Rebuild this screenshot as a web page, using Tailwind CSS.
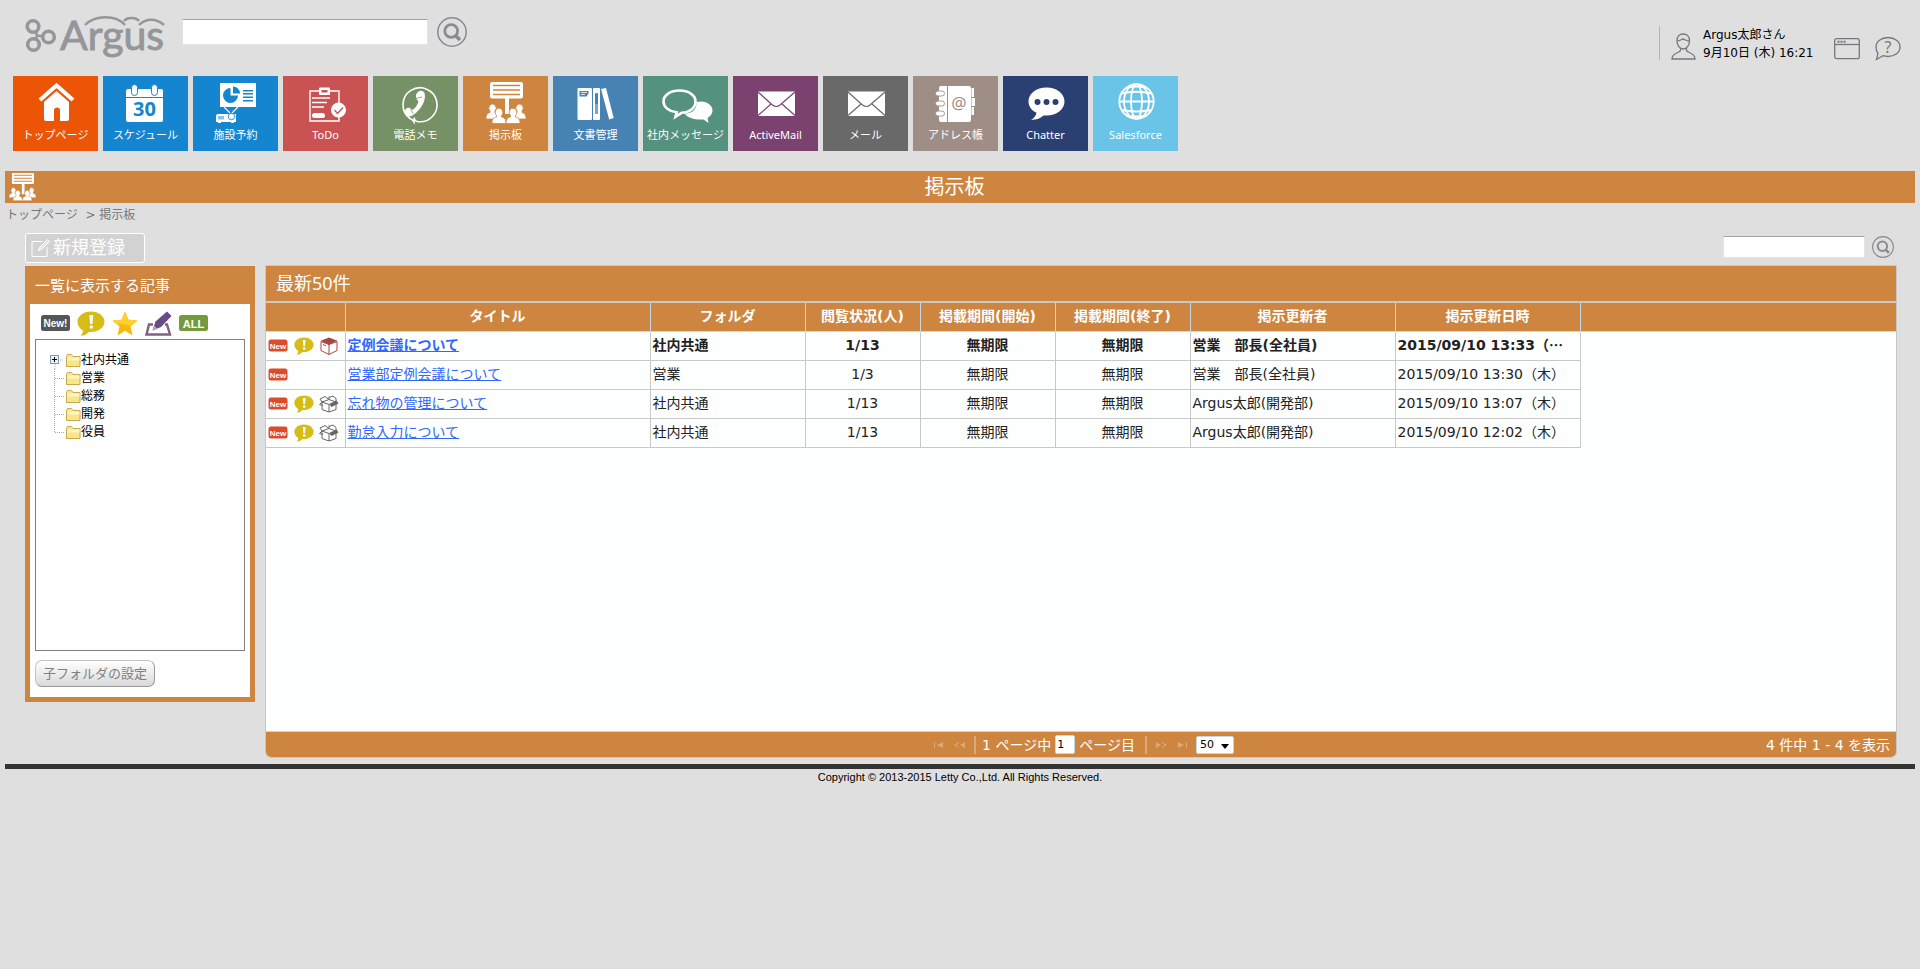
<!DOCTYPE html>
<html lang="ja">
<head>
<meta charset="utf-8">
<title>Argus 掲示板</title>
<script src="https://cdn.jsdelivr.net/npm/@tailwindcss/browser@4"></script>
</head>
<body class="min-h-screen bg-[#dfdfdf] font-['DejaVu_Sans','Noto_Sans_CJK_JP',sans-serif] text-sm text-[#222222]">

<svg class="hidden" aria-hidden="true">
  <symbol id="board" viewBox="0 0 34 41">
    <path fill="#fff" d="M2 0h29a2 2 0 0 1 2 2v12.500a2 2 0 0 1-2 2H19V32h-4V16.500H2a2 2 0 0 1-2-2V2a2 2 0 0 1 2-2z"/>
    <path stroke="#cd853f" stroke-width="1.600" d="M3 3.500h27M3 8h27M3 12.500h27"/>
  </symbol>
  <symbol id="bulletin" viewBox="0 0 40 42">
    <use href="#board" x="4" y="0" width="34" height="41"/>
    <g fill="#fff" stroke="#cd853f" stroke-width=".8">
      <path d="M0 37c0-5 2-6 4-6.500V29a3.600 4 0 1 1 5 0v1.500c2 .5 4 1.500 4 6.500z"/>
      <path d="M27 37c0-5 2-6 4-6.500V29a3.600 4 0 1 1 5 0v1.500c2 .5 4 1.500 4 6.500z"/>
      <path d="M6 41.500c0-5 2-6 4.500-6.500v-1.500a3.800 4.200 0 1 1 5 0V35c2.500.5 4.500 1.500 4.500 6.500z"/>
      <path d="M20 41.500c0-5 2-6 4.500-6.500v-1.500a3.800 4.200 0 1 1 5 0V35c2.500.5 4.500 1.500 4.500 6.500z"/>
    </g>
  </symbol>
  <symbol id="search" viewBox="0 0 30 30">
    <circle cx="15" cy="15" r="14.200" fill="none" stroke="#8b8b8f" stroke-width="1.500"/>
    <circle cx="14.200" cy="14" r="6.400" fill="none" stroke="#8b8b8f" stroke-width="2.800"/>
    <path d="M18.500 18.500l4.500 4.500" stroke="#8b8b8f" stroke-width="3.600"/>
  </symbol>
  <symbol id="folder" viewBox="0 0 15 13">
    <path d="M.5 12.500v-10l1-2h4l1.500 2h7v10z" fill="#f7e68c" stroke="#c9a94a"/>
    <path d="M1.500 3.500h12v3h-12z" fill="#fdf6bd"/>
  </symbol>
  <symbol id="alert" viewBox="0 0 28 25">
    <path d="M14 .5c7.500 0 13.500 4.500 13.500 10.200S21.500 21 14 21l-2-.1C9.500 23.500 6.500 24.800 3.500 24.500c1.500-1 2.500-3 2.500-5C2.500 17.500.5 14.300.5 10.700.5 5 6.500.5 14 .5z" fill="#d6bc17"/>
    <path d="M12.300 4h4l-.9 9h-2.200z" fill="#fff"/><circle cx="14.300" cy="16" r="1.800" fill="#fff"/>
  </symbol>
  <symbol id="boxclosed" viewBox="0 0 18 18">
    <path d="M1 4.500v9l8 4 8-4v-9L9 7.500z" fill="#fff" stroke="#a94442"/>
    <path d="M9 .5l8.300 3.300L9 7.500.7 3.800z" fill="#a94442"/><path d="M9 7v10.500M3 7.500l3 1.300" stroke="#a94442"/>
  </symbol>
  <symbol id="boxopen" viewBox="0 0 20 18">
    <path d="M3 7v7.500l7 2.500 7-2.500V7L10 4.500z" fill="#fff" stroke="#666"/>
    <path d="M3 7l7 2.500V17M10 4.500V1.500M3 7L1 4l5-2.500 4 3M10 2.500l4-1.500 3 2.500v3.500M3 7l-2.500 2.500L4 10.500" fill="none" stroke="#666"/>
    <path d="M10 9l7.500-3.500 2 3L12.500 12z" fill="#666"/>
  </symbol>
  <symbol id="newtag" viewBox="0 0 20 13">
    <rect x=".5" y=".5" width="19" height="12" rx="2.500" fill="#dc4b2c"/>
    <text x="10" y="9.500" text-anchor="middle" font-family="Liberation Sans" font-weight="bold" font-size="8" fill="#fff">New</text>
  </symbol>
</svg>

<header class="flex h-19 items-start pr-[19px] pl-[25px]">
  <a href="#" aria-label="Argus" class="mt-[14px] block">
    <svg width="141" height="48" viewBox="0 0 141 48">
      <g fill="none" stroke="#95969a" stroke-width="3.600">
        <circle cx="8" cy="12.500" r="5.800"/><circle cx="8.500" cy="30.500" r="5.800"/><circle cx="23.500" cy="23" r="5.800"/>
        <path stroke-width="2.400" d="M11 17.500c1 3 1.500 5 0 8M12 21.500l6 1"/>
        <path stroke-width="2.400" d="M60 11C71 .5 91 1 100 11M99 7c3-4 12-4 15 0M114 11c7-7 17-7 25 0"/>
      </g>
      <text x="35" y="36" font-family="Lato" font-size="41" fill="#95969a" stroke="#95969a" stroke-width=".9">Argus</text>
    </svg>
  </a>
  <form class="mt-[17px] ml-4 flex items-center gap-[9px]">
    <input type="text" aria-label="全体検索" class="h-[26px] w-[246px] border border-[#e3e3ea] border-t-[#a5a5a5] bg-white px-1">
    <button type="button" aria-label="検索"><svg class="size-[30px]"><use href="#search"/></svg></button>
  </form>
  <div class="mt-[26px] ml-auto flex">
    <div class="mr-[11px] h-[34px] w-px bg-[#b5b5b5]"></div>
    <svg class="mt-[7px] mr-[7px]" width="25" height="27" viewBox="0 0 25 27" fill="none" stroke="#77777a" stroke-width="1.300">
      <path d="M6 7.500C6 3.500 8.500 1 12.200 1s6.300 2.500 6.300 6.500c0 4.500-2.500 8.500-6.300 8.500S6 12 6 7.500zM6 8c3 0 4-1.500 5.500-2 2.500 0 4 2.500 7 2M9.500 15v2.500C8.500 20 1 19.500 1 26h23c0-6.500-7.500-6-8.500-8.500V15"/>
    </svg>
    <div class="w-[131px] text-xs leading-[18px] whitespace-nowrap text-black">
      <p>Argus太郎さん</p>
      <p>9月10日 (木) 16:21</p>
    </div>
    <button type="button" aria-label="ウィンドウ" class="mt-3 self-start">
      <svg width="26" height="22" viewBox="0 0 26 22" fill="none" stroke="#77777a" stroke-width="1.300"><rect x=".7" y=".7" width="24.600" height="20" rx="2"/><path d="M1 6.500h24"/><path d="M3.500 3.700h8" stroke-width="2" stroke-dasharray="2 1"/></svg>
    </button>
    <button type="button" aria-label="ヘルプ" class="mt-[10px] ml-[14px] self-start">
      <svg width="27" height="25" viewBox="0 0 27 25"><path d="M14 1.500c6.800 0 12 4 12 9.500s-5.200 9.500-12 9.500c-1.800 0-3.500-.3-5-.8L2.500 23.500l1.500-6C2.700 16 2 13.500 2 11c0-5.500 5.200-9.500 12-9.500z" fill="none" stroke="#77777a" stroke-width="1.300"/><text x="14" y="16.500" text-anchor="middle" font-family="Noto Sans" font-size="16" fill="#77777a">?</text></svg>
    </button>
  </div>
</header>

<nav class="flex gap-[5px] px-[13px] font-['Noto_Sans','Noto_Sans_CJK_JP',sans-serif] text-[11px] leading-[18px] text-white">
  <a href="#" class="flex h-[75px] w-[85px] flex-col items-center whitespace-nowrap bg-[#eb5505]">
    <svg width="85" height="50" viewBox="0 0 85 50"><path d="M31 25l12.500-11L56 25v18a2 2 0 0 1-2 2h-7V34c0-3.500-6-3.500-6 0v11h-8a2 2 0 0 1-2-2z" fill="#fff"/><path d="M27 25.500L43.500 11 60 25.500" fill="none" stroke="#eb5505" stroke-width="6"/><path d="M27 24L43.500 9.500 60 24" fill="none" stroke="#fff" stroke-width="4"/></svg>
    トップページ</a>
  <a href="#" class="flex h-[75px] w-[85px] flex-col items-center whitespace-nowrap bg-[#1585cf]">
    <svg width="85" height="50" viewBox="0 0 85 50"><rect x="23" y="13" width="37" height="33" rx="2" fill="#fff"/><path d="M23 21.500h37" stroke="#1585cf"/><g fill="#fff" stroke="#1585cf"><rect x="28.500" y="8.500" width="6" height="11" rx="3"/><rect x="48.500" y="8.500" width="6" height="11" rx="3"/></g><text x="41.500" y="40" text-anchor="middle" font-family="Noto Sans" font-weight="bold" font-size="20" fill="#1585cf">30</text></svg>
    スケジュール</a>
  <a href="#" class="flex h-[75px] w-[85px] flex-col items-center whitespace-nowrap bg-[#1585cf]">
    <svg width="85" height="50" viewBox="0 0 85 50"><rect x="27" y="7" width="36" height="24" fill="#fff"/><path d="M37.500 12v7.500H45A7.500 7.500 0 1 1 37.500 12zM40 10.500a7 7 0 0 1 7 7h-7zM50 14h10v1.500H50zM50 17h10v1.500H50zM50 20.500h10V22H50zM50 24h10v1.500H50z" fill="#1585cf"/><path d="M31 31l6 6M45 31l-6 6" stroke="#fff" stroke-width="1.200"/><path d="M25 38h18v8h-2v1h-3v-1H28v1h-3v-1h-2v-6a2 2 0 0 1 2-2z" fill="#fff"/><circle cx="38.500" cy="40.500" r="3.200" fill="#fff" stroke="#1585cf" stroke-width=".9"/><path d="M26 40v3.500M28 40v3.500M30 40v3.500" stroke="#1585cf"/></svg>
    施設予約</a>
  <a href="#" class="flex h-[75px] w-[85px] flex-col items-center whitespace-nowrap bg-[#c95353]">
    <svg width="85" height="50" viewBox="0 0 85 50"><path d="M56 27V15H27v30h29v-4" fill="none" stroke="#fff" stroke-width="1.400"/><rect x="36" y="11.500" width="11" height="7.500" rx="1" fill="#fff"/><path d="M38.500 14h6v2.500h-6z" fill="#c95353"/><path d="M29 22h18M29 26.500h15M29 31h12" stroke="#fff" stroke-width="1.500"/><rect x="29" y="37" width="13" height="5" rx="2.500" fill="#fff"/><circle cx="55.500" cy="34" r="7.500" fill="#fff"/><path d="M51.500 34l3 3.500 5.500-6" fill="none" stroke="#c95353" stroke-width="1.300"/></svg>
    ToDo</a>
  <a href="#" class="flex h-[75px] w-[85px] flex-col items-center whitespace-nowrap bg-[#769165]">
    <svg width="85" height="50" viewBox="0 0 85 50"><path d="M41 42.500V46c-1-1.500-2.500-3-4-3.500a17 17 0 1 1 7 3c-2.500-.5-2.500-2.500-3-4" fill="none" stroke="#fff" stroke-width="1.600"/><path d="M44.500 16.500c2-2.500 5.500-2 7 .5 1.500 5-1 11-4.500 15.500S39 41 35 40.500c-2.500-1-3.500-5-2.500-7 1.500-2.500 5-2 7 .5 3-2 5.500-6 6-9-3-2-3.500-6-1-8.500z" fill="#fff"/><path d="M43 22.500l6-1.500M37.500 32.500l2.500 5" stroke="#769165" stroke-width=".8"/></svg>
    電話メモ</a>
  <a href="#" class="flex h-[75px] w-[85px] flex-col items-center whitespace-nowrap bg-[#cd853f]">
    <svg width="85" height="50" viewBox="0 0 85 50"><use href="#bulletin" x="23" y="6" width="40" height="42"/></svg>
    掲示板</a>
  <a href="#" class="flex h-[75px] w-[85px] flex-col items-center whitespace-nowrap bg-[#4682b4]">
    <svg width="85" height="50" viewBox="0 0 85 50"><g fill="#fff"><rect x="24.500" y="12" width="14.500" height="32" rx="1"/><rect x="40" y="12" width="7" height="32" rx="1"/><path d="M48 13l5-1 7.700 30-4.500 1.500z"/></g><path d="M26.500 15h9v2.500l-2 3h-7zM42 18c0-1.500 3-1.500 3 0v20h-3z" fill="#4682b4"/><path d="M28 16.500h6M28 18.500h4" stroke="#fff" stroke-width=".8"/><path d="M42 28v10h3V28z" fill="#7ba6cb"/></svg>
    文書管理</a>
  <a href="#" class="flex h-[75px] w-[85px] flex-col items-center whitespace-nowrap bg-[#55917f]">
    <svg width="85" height="50" viewBox="0 0 85 50"><path d="M58 25.500c6.500 0 11.500 4 11.500 9 0 3-2 5.800-5 7.500l1 5-5-3.500c-9 .5-15.500-1.500-19-6C50 38 54 32 53.500 26z" fill="#fff"/><path d="M36.500 14.500c9 0 16 4.500 16 11s-6 11-14 11.300l-6 4 1.200-4.500C26 35.500 20.500 31 20.500 25.500c0-6.500 7-11 16-11z" fill="#55917f" stroke="#fff" stroke-width="2.600"/></svg>
    社内メッセージ</a>
  <a href="#" class="flex h-[75px] w-[85px] flex-col items-center whitespace-nowrap bg-[#7b4270]">
    <svg width="85" height="50" viewBox="0 0 85 50"><rect x="25" y="15.500" width="37" height="24.500" fill="#fff"/><path d="M25 16l14.500 13c2.500 2 5 2 7.500 0L62 16M25 39.500l13-11.500M62 39.500L49 28" fill="none" stroke="#7b4270" stroke-width="1.200"/></svg>
    ActiveMail</a>
  <a href="#" class="flex h-[75px] w-[85px] flex-col items-center whitespace-nowrap bg-[#696969]">
    <svg width="85" height="50" viewBox="0 0 85 50"><rect x="25" y="15.500" width="37" height="24.500" fill="#fff"/><path d="M25 16l14.500 13c2.500 2 5 2 7.500 0L62 16M25 39.500l13-11.500M62 39.500L49 28" fill="none" stroke="#696969" stroke-width="1.200"/></svg>
    メール</a>
  <a href="#" class="flex h-[75px] w-[85px] flex-col items-center whitespace-nowrap bg-[#9e8e86]">
    <svg width="85" height="50" viewBox="0 0 85 50"><path d="M28 10h28a2 2 0 0 1 2 2v32a2 2 0 0 1-2 2H28a2 2 0 0 1-2-2V12a2 2 0 0 1 2-2zM58.500 12H61v9h-2.500zM58.500 22H62v8h-3.500zM58.500 31H61v8h-2.500z" fill="#fff"/><path d="M34.500 10v36" stroke="#9e8e86"/><g fill="#fff" stroke="#9e8e86" stroke-width=".9"><rect x="22.500" y="15" width="9" height="5" rx="2.500"/><rect x="22.500" y="25" width="9" height="5" rx="2.500"/><rect x="22.500" y="35" width="9" height="5" rx="2.500"/></g><text x="46" y="33" text-anchor="middle" font-family="Noto Sans" font-size="17" fill="#9e8e86">@</text></svg>
    アドレス帳</a>
  <a href="#" class="flex h-[75px] w-[85px] flex-col items-center whitespace-nowrap bg-[#2a4073]">
    <svg width="85" height="50" viewBox="0 0 85 50"><path d="M43.500 11.500c10 0 18 6 18 14s-8 14-18 14h-3c-3 3-8 4.700-12.500 4.300 3-1.500 5-4 5.500-7-5-2.500-8-6.500-8-11.300 0-8 8-14 18-14z" fill="#fff"/><g fill="#2a4073"><circle cx="34.500" cy="26" r="3"/><circle cx="43.500" cy="26" r="3"/><circle cx="52.500" cy="26" r="3"/></g></svg>
    Chatter</a>
  <a href="#" class="flex h-[75px] w-[85px] flex-col items-center whitespace-nowrap bg-[#6ac4e8]">
    <svg width="85" height="50" viewBox="0 0 85 50" fill="none" stroke="#fff" stroke-width="1.800"><circle cx="43.500" cy="25.500" r="17.200"/><ellipse cx="43.500" cy="25.500" rx="12.500" ry="17.300"/><ellipse cx="43.500" cy="25.500" rx="5.500" ry="17.300"/><path d="M26 25.500h35M28.500 17.500Q43.500 14 58.500 17.500M28.500 34Q43.500 37 58.500 34M33 12Q43.500 9 54 12M33 39.500Q43.500 41.500 54 39.500"/></svg>
    Salesforce</a>
</nav>

<div class="mx-[5px] mt-5 flex h-8 items-center bg-[#cd853f] pr-[46px] pl-1">
  <svg class="h-[28px] w-[27px]" viewBox="0 0 40 42" preserveAspectRatio="none"><use href="#bulletin" width="40" height="42"/></svg>
  <h1 class="ml-1 flex-1 text-center text-xl leading-8 text-white">掲示板</h1>
</div>

<div class="ml-[6px] text-xs leading-6 text-[#777777]"><a href="#">トップページ</a> &nbsp;&gt; 掲示板</div>

<div class="mt-[6px] flex h-[32px] items-start justify-between pr-[26px] pl-[25px]">
  <button type="button" class="flex h-[30px] w-[120px] items-center rounded-[3px] border border-white bg-[#d2d2d2] pl-[5px] text-lg leading-7 whitespace-nowrap text-white">
    <svg width="20" height="20" viewBox="0 0 20 20" fill="none" stroke="#fff"><path d="M12 3.500H1v15h15V9"/><path d="M7.500 12.500l1-3 8-8 2 2-8 8z" fill="#e6e6e6"/></svg>
    <span class="ml-[2px]">新規登録</span>
  </button>
  <form class="mt-[3px] flex items-center gap-[7px]">
    <input type="text" aria-label="掲示板検索" class="h-[22px] w-[142px] border border-[#e3e3ea] border-t-[#a5a5a5] bg-white px-1">
    <button type="button" aria-label="検索"><svg class="size-[22px]"><use href="#search"/></svg></button>
  </form>
</div>

<main class="flex items-start gap-[10px] pr-[23px] pl-[25px]">
  <aside class="mt-px w-[230px] shrink-0 border-5 border-t-0 border-[#cd853f] bg-white">
    <h2 class="bg-[#cd853f] pt-[2px] pl-[5px] text-[15px] leading-9 text-white">一覧に表示する記事</h2>
    <div class="px-[5px] pb-[10px]">
      <div class="flex h-[35px] items-center gap-[7px] pt-[3px] pl-[6px]">
        <button type="button" aria-label="New!"><svg width="29" height="16" viewBox="0 0 29 16"><rect width="29" height="16" rx="2.500" fill="#55565a"/><text x="14.500" y="12" text-anchor="middle" font-family="Liberation Sans" font-weight="bold" font-size="10" fill="#fff">New!</text></svg></button>
        <button type="button" aria-label="重要"><svg width="28" height="25"><use href="#alert"/></svg></button>
        <button type="button" aria-label="お気に入り"><svg width="26" height="25" viewBox="0 0 26 25"><path d="M13 .5l3.500 8.300 9 .7-7 6 2 9-7.500-4.800L5.500 24.500l2-9-7-6 9-.7z" fill="#f6b90c"/><path d="M13 .5l3.500 8.300 9 .7-7 5.500c-5-2-9-2-14.500-2L.5 9.500l9-.7z" fill="#fdcf2f"/></svg></button>
        <button type="button" aria-label="下書き"><svg width="27" height="25" viewBox="0 0 27 25"><path d="M8 13.500H4L1.500 23.500h23.500l-3-10h-2" fill="none" stroke="#80617e" stroke-width="2.400"/><path d="M7.500 19.500l3-9L22 .5l4.500 4.500L16 16z" fill="#674a86"/><path d="M7.500 19.500l1.500-5 3.500 3.500z" fill="#b9a3c4"/></svg></button>
        <button type="button" aria-label="ALL"><svg width="29" height="16" viewBox="0 0 29 16"><rect width="29" height="16" rx="2.500" fill="#749a3c"/><text x="14.500" y="12.500" text-anchor="middle" font-family="Liberation Sans" font-weight="bold" font-size="11" fill="#fff">ALL</text></svg></button>
      </div>
      <div class="h-[312px] border border-[#808080] pt-[11px] pl-[14px] text-xs text-black">
        <ul class="leading-[18px]">
          <li class="flex items-center">
            <svg width="16" height="18" viewBox="0 0 16 18"><path d="M5 13v5M10 9h4" stroke="#aaa" stroke-dasharray="1 1"/><rect x=".5" y="4.500" width="8" height="8" fill="#eef2f8" stroke="#7b9ac0"/><path d="M2 8.500h5M4.500 6v5" stroke="#000"/></svg>
            <a href="#" class="flex items-center"><svg width="15" height="13"><use href="#folder"/></svg>社内共通</a></li>
          <li class="flex items-center">
            <svg width="16" height="18" viewBox="0 0 16 18"><path d="M4.500 0v18M5 9.500h9" stroke="#aaa" stroke-dasharray="1 1"/></svg>
            <a href="#" class="flex items-center"><svg width="15" height="13"><use href="#folder"/></svg>営業</a></li>
          <li class="flex items-center">
            <svg width="16" height="18" viewBox="0 0 16 18"><path d="M4.500 0v18M5 9.500h9" stroke="#aaa" stroke-dasharray="1 1"/></svg>
            <a href="#" class="flex items-center"><svg width="15" height="13"><use href="#folder"/></svg>総務</a></li>
          <li class="flex items-center">
            <svg width="16" height="18" viewBox="0 0 16 18"><path d="M4.500 0v18M5 9.500h9" stroke="#aaa" stroke-dasharray="1 1"/></svg>
            <a href="#" class="flex items-center"><svg width="15" height="13"><use href="#folder"/></svg>開発</a></li>
          <li class="flex items-center">
            <svg width="16" height="18" viewBox="0 0 16 18"><path d="M4.500 0v10M5 9.500h9" stroke="#aaa" stroke-dasharray="1 1"/></svg>
            <a href="#" class="flex items-center"><svg width="15" height="13"><use href="#folder"/></svg>役員</a></li>
        </ul>
      </div>
      <button type="button" class="mt-[9px] block h-[27px] w-[120px] rounded-[7px] border border-[#c4c4c4] border-r-[#999999] border-b-[#999999] bg-linear-to-b from-white to-[#d9d9d9] text-[13px] leading-6 whitespace-nowrap text-[#808080]">子フォルダの設定</button>
    </div>
  </aside>

  <section class="min-w-0 flex-1 overflow-hidden rounded-b-md border border-[#c8c8c8] bg-[#fdfefe]">
    <h2 class="border-b-2 border-[#c8c8c8] bg-[#cd853f] pb-px pl-[10px] font-['Noto_Sans','Noto_Sans_CJK_JP',sans-serif] text-lg leading-[34px] text-white">最新50件</h2>
    <div class="min-h-[428px]">
      <table class="w-full table-fixed border-collapse leading-5 whitespace-nowrap">
        <colgroup><col class="w-[79px]"><col class="w-[305px]"><col class="w-[155px]"><col class="w-[115px]"><col class="w-[135px]"><col class="w-[135px]"><col class="w-[205px]"><col class="w-[185px]"><col></colgroup>
        <thead>
          <tr class="h-[28px] border-b border-[#c5d6e5] bg-[#cd853f] text-white">
            <th class="border-r border-[#c5d6e5]"></th>
            <th class="border-r border-[#c5d6e5] pb-[2px]">タイトル</th>
            <th class="border-r border-[#c5d6e5] pb-[2px]">フォルダ</th>
            <th class="border-r border-[#c5d6e5] pb-[2px]">閲覧状況(人)</th>
            <th class="border-r border-[#c5d6e5] pb-[2px]">掲載期間(開始)</th>
            <th class="border-r border-[#c5d6e5] pb-[2px]">掲載期間(終了)</th>
            <th class="border-r border-[#c5d6e5] pb-[2px]">掲示更新者</th>
            <th class="border-r border-[#c5d6e5] pb-[2px]">掲示更新日時</th>
            <th></th>
          </tr>
        </thead>
        <tbody>
          <tr class="h-[29px] font-bold">
            <td class="border-r border-b border-[#c8c8c8] pl-[2px]"><div class="flex items-center"><svg width="20" height="13"><use href="#newtag"/></svg><svg class="ml-[6px]" width="20" height="18"><use href="#alert"/></svg><svg class="ml-[6px]" width="18" height="18"><use href="#boxclosed"/></svg></div></td>
            <td class="border-r border-b border-[#c8c8c8] pb-[2px] pl-[2px]"><a href="#" class="text-[#3366ff] underline">定例会議について</a></td>
            <td class="border-r border-b border-[#c8c8c8] pb-[2px] pl-[2px]">社内共通</td>
            <td class="border-r border-b border-[#c8c8c8] pb-[2px] text-center">1/13</td>
            <td class="border-r border-b border-[#c8c8c8] pb-[2px] text-center">無期限</td>
            <td class="border-r border-b border-[#c8c8c8] pb-[2px] text-center">無期限</td>
            <td class="border-r border-b border-[#c8c8c8] pb-[2px] pl-[2px]">営業　部長(全社員)</td>
            <td class="border-r border-b border-[#c8c8c8] pb-[2px] pl-[2px]">2015/09/10 13:33（<span class="font-['Noto_Sans_CJK_JP',sans-serif]">…</span></td>
          </tr>
          <tr class="h-[29px]">
            <td class="border-r border-b border-[#c8c8c8] pl-[2px]"><svg width="20" height="13"><use href="#newtag"/></svg></td>
            <td class="border-r border-b border-[#c8c8c8] pb-[2px] pl-[2px]"><a href="#" class="text-[#3366ff] underline">営業部定例会議について</a></td>
            <td class="border-r border-b border-[#c8c8c8] pb-[2px] pl-[2px]">営業</td>
            <td class="border-r border-b border-[#c8c8c8] pb-[2px] text-center">1/3</td>
            <td class="border-r border-b border-[#c8c8c8] pb-[2px] text-center">無期限</td>
            <td class="border-r border-b border-[#c8c8c8] pb-[2px] text-center">無期限</td>
            <td class="border-r border-b border-[#c8c8c8] pb-[2px] pl-[2px]">営業　部長(全社員)</td>
            <td class="border-r border-b border-[#c8c8c8] pb-[2px] pl-[2px]">2015/09/10 13:30（木）</td>
          </tr>
          <tr class="h-[29px]">
            <td class="border-r border-b border-[#c8c8c8] pl-[2px]"><div class="flex items-center"><svg width="20" height="13"><use href="#newtag"/></svg><svg class="ml-[6px]" width="20" height="18"><use href="#alert"/></svg><svg class="ml-[5px]" width="20" height="18"><use href="#boxopen"/></svg></div></td>
            <td class="border-r border-b border-[#c8c8c8] pb-[2px] pl-[2px]"><a href="#" class="text-[#3366ff] underline">忘れ物の管理について</a></td>
            <td class="border-r border-b border-[#c8c8c8] pb-[2px] pl-[2px]">社内共通</td>
            <td class="border-r border-b border-[#c8c8c8] pb-[2px] text-center">1/13</td>
            <td class="border-r border-b border-[#c8c8c8] pb-[2px] text-center">無期限</td>
            <td class="border-r border-b border-[#c8c8c8] pb-[2px] text-center">無期限</td>
            <td class="border-r border-b border-[#c8c8c8] pb-[2px] pl-[2px]">Argus太郎(開発部)</td>
            <td class="border-r border-b border-[#c8c8c8] pb-[2px] pl-[2px]">2015/09/10 13:07（木）</td>
          </tr>
          <tr class="h-[29px]">
            <td class="border-r border-b border-[#c8c8c8] pl-[2px]"><div class="flex items-center"><svg width="20" height="13"><use href="#newtag"/></svg><svg class="ml-[6px]" width="20" height="18"><use href="#alert"/></svg><svg class="ml-[5px]" width="20" height="18"><use href="#boxopen"/></svg></div></td>
            <td class="border-r border-b border-[#c8c8c8] pb-[2px] pl-[2px]"><a href="#" class="text-[#3366ff] underline">勤怠入力について</a></td>
            <td class="border-r border-b border-[#c8c8c8] pb-[2px] pl-[2px]">社内共通</td>
            <td class="border-r border-b border-[#c8c8c8] pb-[2px] text-center">1/13</td>
            <td class="border-r border-b border-[#c8c8c8] pb-[2px] text-center">無期限</td>
            <td class="border-r border-b border-[#c8c8c8] pb-[2px] text-center">無期限</td>
            <td class="border-r border-b border-[#c8c8c8] pb-[2px] pl-[2px]">Argus太郎(開発部)</td>
            <td class="border-r border-b border-[#c8c8c8] pb-[2px] pl-[2px]">2015/09/10 12:02（木）</td>
          </tr>
        </tbody>
      </table>
    </div>
    <div class="grid h-[26px] grid-cols-[1fr_auto_1fr] items-center border-t border-[#c5d6e5] bg-[#cd853f] leading-6 whitespace-nowrap text-white">
      <div></div>
      <div class="flex items-center pl-[6px]">
        <button type="button" aria-label="最初" disabled><svg width="10" height="8" viewBox="0 0 10 8" fill="#dcaa79"><path d="M0 1h1v6H0zM9 1v6L3 4z"/></svg></button>
        <button type="button" aria-label="前" disabled class="ml-[10px]"><svg width="12" height="8" viewBox="0 0 12 8" fill="#dcaa79"><path d="M11 1v6L6 4zM5 1v1L2 4l3 2v1L0 4z"/></svg></button>
        <span class="mr-[6px] ml-2 h-[18px] w-[2px] bg-[#dca878]"></span>
        <span>1 ページ中</span>
        <input type="text" value="1" aria-label="ページ番号" class="mx-1 h-[19px] w-5 rounded-xs border border-[#c5d6e5] bg-white pl-px text-[11px] text-black">
        <span>ページ目</span>
        <span class="mr-2 ml-[10px] h-[18px] w-[2px] bg-[#dca878]"></span>
        <button type="button" aria-label="次" disabled><svg width="12" height="8" viewBox="0 0 12 8" fill="#dcaa79"><path d="M1 1v6l5-3zM7 1v1l3 2-3 2v1l5-3z"/></svg></button>
        <button type="button" aria-label="最後" disabled class="ml-[11px]"><svg width="10" height="8" viewBox="0 0 10 8" fill="#dcaa79"><path d="M8 1h1v6H8zM0 1v6l6-3z"/></svg></button>
        <span class="relative ml-2 flex">
          <select aria-label="表示件数" class="h-[18px] w-[38px] appearance-none rounded-xs border border-[#c5d6e5] bg-white pl-[3px] text-[11px] leading-4 text-black"><option>50</option></select>
          <svg class="pointer-events-none absolute top-2 right-[5px]" width="8" height="5" viewBox="0 0 8 5"><path d="M0 0h8L4 5z"/></svg>
        </span>
      </div>
      <div class="pr-[6px] text-right">4 件中 1 - 4 を表示</div>
    </div>
  </section>
</main>

<footer class="mx-[5px] mt-[6px] border-t-5 border-[#333333] text-center font-['Liberation_Sans',sans-serif] text-[11px] leading-4 text-black">Copyright © 2013-2015 Letty Co.,Ltd. All Rights Reserved.</footer>
</body>
</html>
